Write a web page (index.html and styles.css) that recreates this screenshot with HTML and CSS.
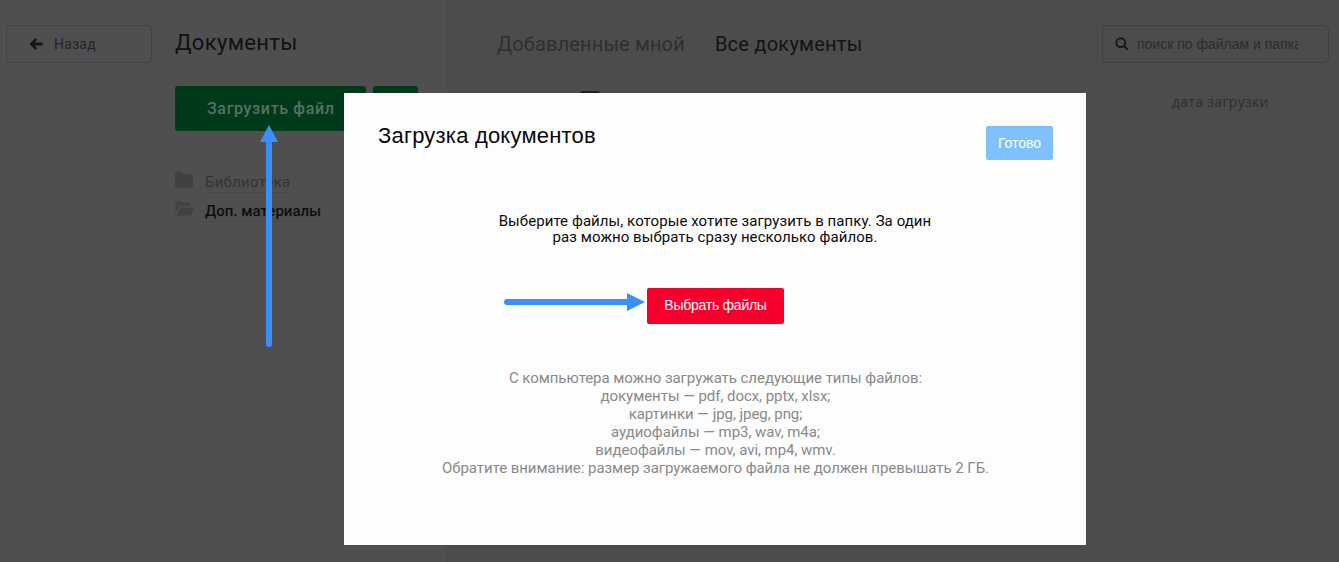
FILE: index.html
```html
<!DOCTYPE html>
<html lang="ru">
<head>
<meta charset="utf-8">
<title>Документы</title>
<link rel="stylesheet" href="styles.css">
</head>
<body>
<div class="page">
  <div class="left-area">
    <aside class="back-col">
      <a class="back"><svg class="back-ico" viewBox="0 0 14 12"><path d="M6.300 0 L0.500 6 L6.300 12 L8.200 10.100 L5.600 7.500 H13.500 V4.500 H5.600 L8.200 1.900 Z"/></svg>Назад</a>
    </aside>
    <section class="docs-col">
      <h1 class="docs-title">Документы</h1>
      <div class="upload-row">
        <div class="upload">Загрузить файл</div>
        <div class="upload-more"></div>
      </div>
      <ul class="folders">
        <li class="folder"><svg class="folder-ico" viewBox="0 0 18 16"><path d="M0 2 Q0 0 2 0 H6 Q7.500 0 8 2 H16 Q18 2 18 4 V14 Q18 16 16 16 H2 Q0 16 0 14 Z"/></svg><span class="folder-link">Библиотека</span></li>
        <li class="folder folder-open"><svg class="folder-ico" viewBox="0 0 19 15"><path d="M0 2 Q0 0 2 0 H5.500 Q7 0 7.500 1.500 H13 Q15 1.500 15 3.500 V5 H5 Q3.500 5 2.800 6.500 L0 12 Z M1 14.500 L4.200 7.500 Q4.700 6.500 6 6.500 H18 Q19.300 6.500 18.700 7.700 L15.800 13.500 Q15.300 14.500 14 14.500 Z"/></svg><span class="folder-link">Доп. материалы</span></li>
      </ul>
    </section>
  </div>
  <section class="main-col">
    <div class="tabs-col">
      <div class="tabs">
        <span class="tab">Добавленные мной</span>
        <span class="tab tab-active">Все документы</span>
      </div>
      <div class="sort-mark"></div>
    </div>
    <div class="search-col">
      <div class="search"><svg class="search-ico" viewBox="0 0 14 14"><circle cx="5.700" cy="5.700" r="4.400"/><path d="M9 9 L12.800 12.800"/></svg><span class="search-text">поиск по файлам и папкам</span></div>
      <div class="sort">дата загрузки</div>
    </div>
  </section>
</div>

<div class="modal">
  <div class="modal-head">
    <h2 class="modal-title">Загрузка документов</h2>
    <div class="done">Готово</div>
  </div>
  <p class="lead">Выберите файлы, которые хотите загрузить в папку. За один<br>раз можно выбрать сразу несколько файлов.</p>
  <div class="pick">Выбрать файлы</div>
  <p class="types">С компьютера можно загружать следующие типы файлов:<br>документы — pdf, docx, pptx, xlsx;<br>картинки — jpg, jpeg, png;<br>аудиофайлы — mp3, wav, m4a;<br>видеофайлы — mov, avi, mp4, wmv.<br>Обратите внимание: размер загружаемого файла не должен превышать 2 ГБ.</p>
</div>

<svg class="arrow arrow-up" viewBox="0 0 18 223"><path d="M9 0 L18 17 H12 V219 Q12 222 9 222 Q6 222 6 219 V17 H0 Z"/></svg>
<svg class="arrow arrow-right" viewBox="0 0 141 18"><path d="M141 9 L123 0 V6 H3 Q0 6 0 9 Q0 12 3 12 H123 V18 Z"/></svg>
</body>
</html>
```
FILE: styles.css
```css
* { box-sizing: border-box; }
html, body { margin: 0; height: 100%; }
body {
  background: #4c4c4c;
  font-family: Roboto, "Liberation Sans", sans-serif;
  overflow: hidden;
}
.page { display: flex; height: 562px; }
.left-area { display: flex; width: 446px; flex: none; padding-top: 25px; background: #4f4f4f; }
.back-col { width: 175px; padding-left: 6px; flex: none; }
.back {
  display: flex; align-items: center;
  width: 146px; height: 38px; padding-left: 22px;
  border: 1px solid #42424a; border-radius: 4px;
  font-size: 14px; letter-spacing: .2px; color: #20232b;
}
.back-ico { width: 14px; height: 12px; margin-right: 11px; fill: #14161c; flex: none; }
.docs-col { flex: 1; }
.docs-title { margin: 0; font-size: 22px; line-height: 36px; font-weight: 400; letter-spacing: .33px; color: #111; }
.upload-row { display: flex; gap: 7px; margin-top: 25px; }
.upload {
  width: 191px; height: 45px; background: #003a1b; border-radius: 3px;
  color: #5b6e62; font-size: 16px; font-weight: 500; letter-spacing: .65px;
  display: flex; align-items: center; padding-left: 32px;
}
.upload-more { width: 45px; height: 45px; background: #003a1b; border-radius: 3px; }
.folders { list-style: none; margin: 40px 0 0; padding: 0; }
.folder { display: flex; align-items: flex-start; height: 29px; font-size: 15px; letter-spacing: .25px; color: #333; }
.folder-open { color: #0e0e12; font-weight: 500; letter-spacing: 0; }
.folder-ico { width: 18px; height: 16px; margin-right: 12px; fill: #414141; flex: none; margin-top: 1px; }
.folder-open .folder-ico { width: 20px; height: 15px; margin-right: 10px; }
.folder-link { border-bottom: 1px dotted #1d4a80; line-height: 19px; margin-top: 2px; }
.main-col { flex: 1; display: flex; justify-content: space-between; padding: 25px 10px 0 51px; }
.tabs { display: flex; gap: 30px; font-size: 20px; letter-spacing: .15px; line-height: 38px; }
.tab { color: #2c2f36; }
.tab-active { color: #111319; letter-spacing: .25px; }
.sort-mark { width: 20px; height: 4px; margin: 28px 0 0 83px; background: #1f1f1f; border-radius: 3px 3px 0 0; }
.search-col { width: 227px; }
.search {
  display: flex; align-items: center; height: 38px; padding-left: 12px;
  border: 1px solid #3f3f47; border-radius: 5px;
  font-family: "Liberation Sans", sans-serif; font-size: 14px; color: #2b2b2f;
}
.search-ico { width: 14px; height: 14px; margin-right: 8px; fill: none; stroke: #18181c; stroke-width: 2; flex: none; }
.search-text { width: 161px; overflow: hidden; white-space: nowrap; }
.sort { margin: 29px 0 0 70px; font-family: "Open Sans", sans-serif; font-size: 14px; letter-spacing: .3px; line-height: 20px; color: #2e2e2e; }

.modal {
  position: absolute; left: 344px; top: 93px; width: 742px; height: 452px;
  background: #fdfdfd; padding: 30px 33px 0 34px; text-align: center;
}
.modal-head { display: flex; justify-content: space-between; align-items: flex-start; }
.modal-title {
  margin: 0; font-family: "Liberation Sans", sans-serif; font-weight: 400;
  font-size: 22px; letter-spacing: .2px; line-height: 26px; color: #0a0a0a;
}
.done {
  width: 67px; height: 34px; margin-top: 3px; background: #7fc1ff; border-radius: 2px;
  color: #fff; font-family: "Liberation Sans", sans-serif; font-size: 14px;
  display: flex; align-items: center; justify-content: center;
}
.lead { margin: 53px 0 0; padding-right: 1px; font-size: 15px; letter-spacing: .07px; line-height: 16px; color: #0c0c0c; }
.pick {
  width: 137px; height: 36px; margin: 43px auto 0; padding-bottom: 2px; background: #f5002d; border-radius: 2px;
  color: #fff; font-family: "Liberation Sans", sans-serif; font-size: 14px; letter-spacing: -.25px;
  display: flex; align-items: center; justify-content: center;
}
.types { margin: 45px 0 0; font-size: 15px; letter-spacing: -.05px; line-height: 18px; color: #8a8a8a; }

.arrow { position: absolute; fill: #3a8fff; }
.arrow-up { left: 260px; top: 125px; width: 18px; height: 223px; }
.arrow-right { left: 504px; top: 293px; width: 141px; height: 18px; }
```
